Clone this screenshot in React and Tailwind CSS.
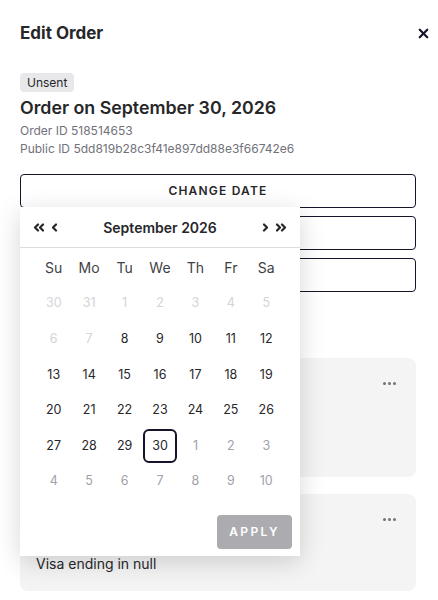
import { X } from "lucide-react";

// edit order panel with date picker open

const weekdays = ["Su", "Mo", "Tu", "We", "Th", "Fr", "Sa"];

const buildDays = () => {
  const days = [];
  // disabled days from prev month + early september
  [30, 31, 1, 2, 3, 4, 5, 6, 7].forEach((d) => days.push({ d, kind: "disabled" }));
  for (let d = 8; d <= 30; d++) days.push({ d, kind: d === 30 ? "selected" : "normal" });
  for (let d = 1; d <= 10; d++) days.push({ d, kind: "outside" });
  return days;
};

const Chevron = ({ dir = "left", double = false }) => (
  <svg
    width={double ? 12 : 7}
    height="9"
    viewBox={double ? "0 0 12 9" : "0 0 7 9"}
    fill="none"
    stroke="#27272a"
    strokeWidth="2.2"
    strokeLinecap="round"
    strokeLinejoin="round"
  >
    {dir === "left" ? (
      <>
        <polyline points="5,1.5 2,4.5 5,7.5" />
        {double && <polyline points="10,1.5 7,4.5 10,7.5" />}
      </>
    ) : (
      <>
        <polyline points="2,1.5 5,4.5 2,7.5" />
        {double && <polyline points="7,1.5 10,4.5 7,7.5" />}
      </>
    )}
  </svg>
);

const Dots = () => (
  <div className="flex gap-[2px]">
    <span className="w-[3px] h-[3px] rounded-full bg-[#71717a]" />
    <span className="w-[3px] h-[3px] rounded-full bg-[#71717a]" />
    <span className="w-[3px] h-[3px] rounded-full bg-[#71717a]" />
  </div>
);

const Calendar = () => (
  <div className="absolute left-5 top-[207px] w-[280px] bg-white shadow-[0_6px_24px_rgba(0,0,0,0.16)] pb-[7px]">
    <div className="h-[41px] flex items-center justify-between px-[13px] border-b border-[#dcdce0]">
      <div className="flex items-center gap-[6px]">
        <Chevron dir="left" double />
        <Chevron dir="left" />
      </div>
      <span className="text-[14px] font-semibold text-[#27272a]">September 2026</span>
      <div className="flex items-center gap-[6px]">
        <Chevron dir="right" />
        <Chevron dir="right" double />
      </div>
    </div>
    <div className="px-4">
      <div className="grid grid-cols-7 h-[38px] pt-[1px] items-center text-center text-[14px] text-[#3f3f46]">
        {weekdays.map((w) => (
          <span key={w}>{w}</span>
        ))}
      </div>
      <div className="grid grid-cols-7 auto-rows-[35.6px] text-[12.5px] text-center">
        {buildDays().map((day, i) => (
          <div key={i} className="flex items-center justify-center">
            {day.kind === "selected" ? (
              <span className="w-[34px] h-[34px] flex items-center justify-center border-2 border-[#16142a] rounded-md text-[#27272a]">
                {day.d}
              </span>
            ) : (
              <span
                className={
                  day.kind === "disabled"
                    ? "text-[#d4d4d8]"
                    : day.kind === "outside"
                    ? "text-[#a1a1aa]"
                    : "text-[#27272a]"
                }
              >
                {day.d}
              </span>
            )}
          </div>
        ))}
      </div>
    </div>
    <div className="flex justify-end pr-2 mt-[15px]">
      <button className="w-[75px] h-[34px] rounded bg-[#acacb0] text-white text-[12px] font-semibold tracking-[0.2em]">
        APPLY
      </button>
    </div>
  </div>
);

export default function App() {
  return (
    <div
      className="relative w-[438px] h-[600px] overflow-hidden bg-white text-[#27272a]"
      style={{ fontFamily: "Inter, 'Noto Sans', sans-serif" }}
    >
      {/* header */}
      <div className="h-[66px] flex items-center justify-between pl-5 pr-[7px]">
        <h1 className="text-[17px] font-bold text-[#27272a] mt-[1px]">Edit Order</h1>
        <X className="w-[15px] h-[15px] text-[#16142a]" strokeWidth={3.5} />
      </div>

      <div className="pl-5 pr-[22px]">
        <span className="inline-flex items-center h-[19px] px-[7px] mt-[7px] rounded bg-[#e8e8ea] text-[12px] text-[#27272a]">
          Unsent
        </span>
        <h2 className="mt-[3px] text-[17.8px] leading-6 font-semibold">Order on September 30, 2026</h2>
        <p className="text-[12px] leading-[18px] mt-[2px] text-[#71717a]">Order ID 518514653</p>
        <p className="text-[12px] leading-[18px] text-[#71717a]">Public ID 5dd819b28c3f41e897dd88e3f66742e6</p>

        <div className="mt-4 flex flex-col gap-2">
          <button className="h-[34px] border border-[#16142a] rounded text-[12px] font-semibold tracking-[0.1em] text-[#27272a]">
            CHANGE DATE
          </button>
          <button className="h-[34px] border border-[#16142a] rounded text-[12px] font-semibold tracking-[0.1em]">
            CHANGE ADDRESS
          </button>
          <button className="h-[34px] border border-[#16142a] rounded text-[12px] font-semibold tracking-[0.1em]">
            CANCEL ORDER
          </button>
        </div>

        <div className="mt-[66px] flex flex-col gap-[17px]">
          <div className="h-[119px] rounded-lg bg-[#f4f4f5] flex justify-end pr-5 pt-6">
            <Dots />
          </div>
          <div className="h-[97px] rounded-lg bg-[#f4f4f5] pl-4 pr-5 pt-6 flex flex-col">
            <div className="flex justify-end">
              <Dots />
            </div>
            <p className="mt-auto mb-[17px] text-[14px] text-[#27272a]">Visa ending in null</p>
          </div>
        </div>
      </div>

      <Calendar />
    </div>
  );
}
